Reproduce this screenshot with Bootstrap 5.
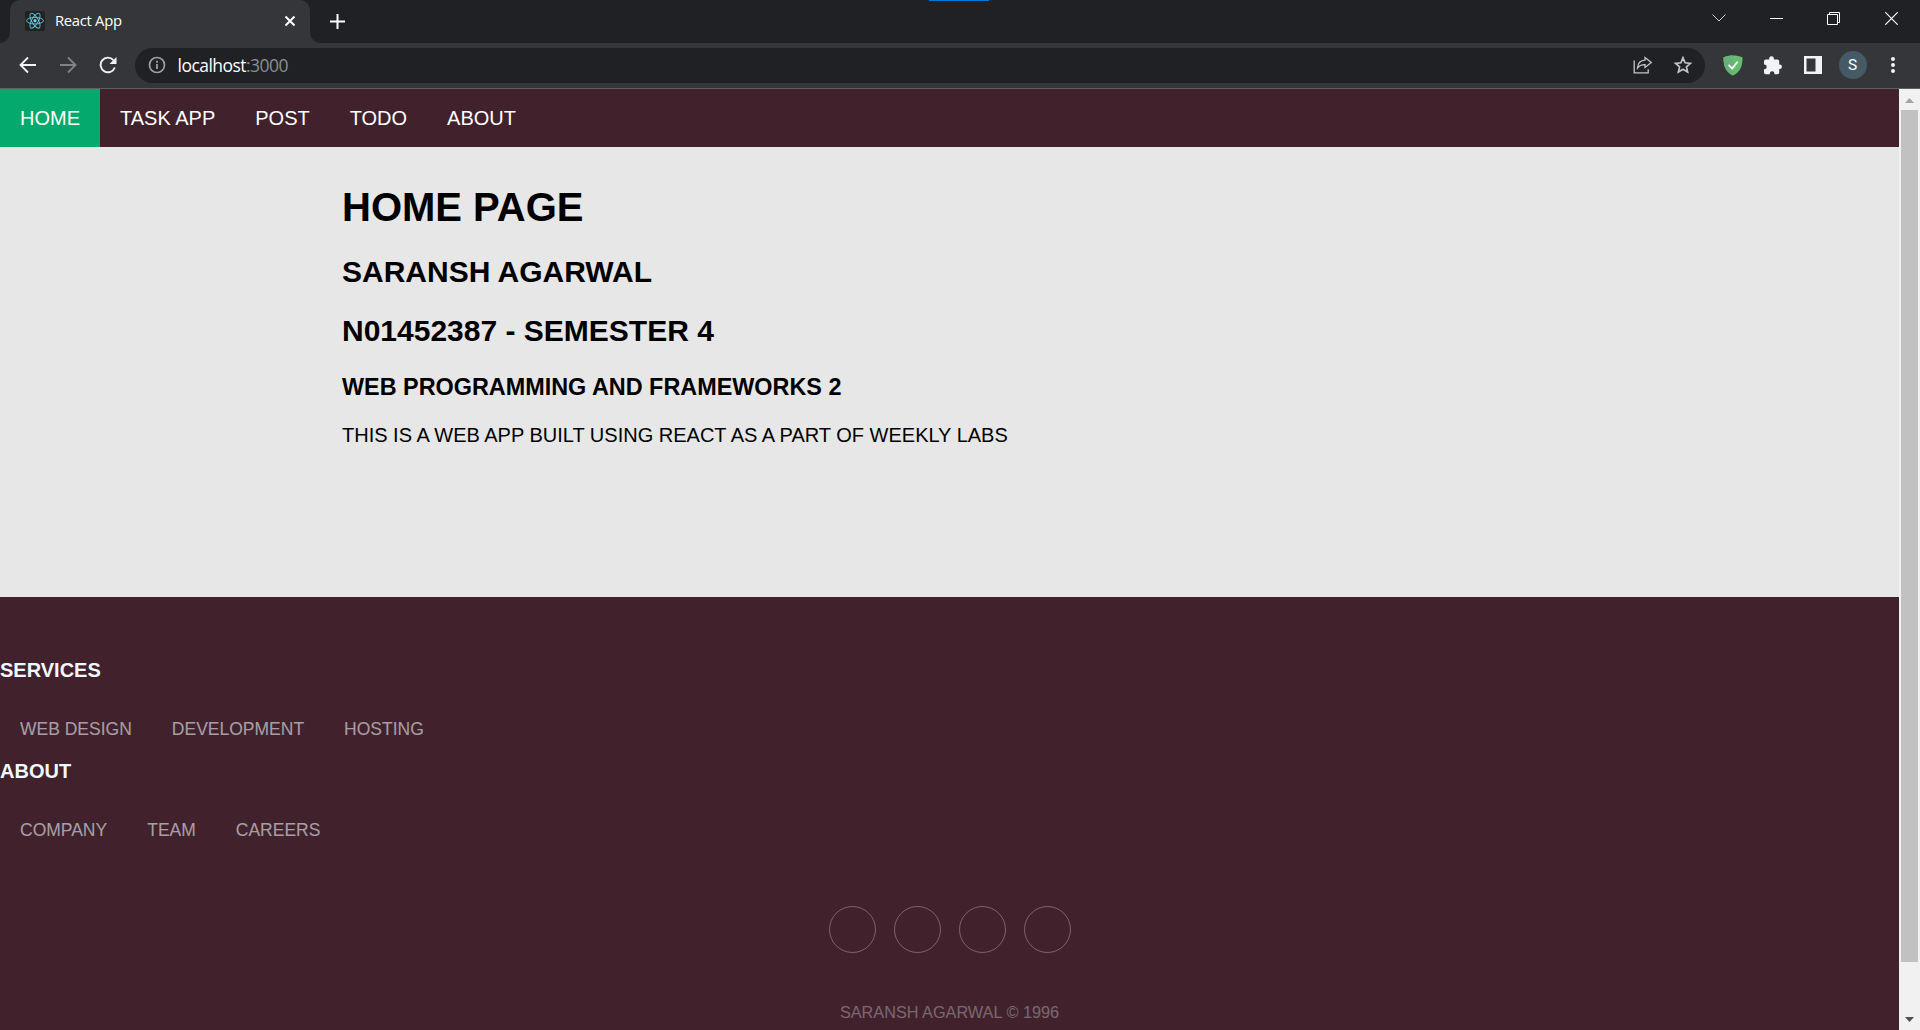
<!DOCTYPE html>
<html lang="en">
<head>
<meta charset="utf-8">
<title>React App</title>
<meta name="viewport" content="width=device-width, initial-scale=1">
<link href="https://cdn.jsdelivr.net/npm/bootstrap@5.3.0/dist/css/bootstrap.min.css" rel="stylesheet">
<style>
body{height:1030px;overflow:hidden;background:#e7e7e7;font-family:"Liberation Sans",Arial,sans-serif;font-size:20px;line-height:23px;color:#000}
svg{display:block;flex:none}
.tabstrip{height:43px;background:#202124;font-family:"Open Sans","Noto Sans",sans-serif}
.tab{width:300px;height:43px;margin-left:10px;background:#35363a;border-radius:10px 10px 0 0}
.tab::before,.tab::after{content:"";position:absolute;bottom:0;width:10px;height:10px}
.tab::before{left:-10px;background:radial-gradient(circle at 0 0,#202124 9.5px,#35363a 10px)}
.tab::after{right:-10px;background:radial-gradient(circle at 100% 0,#202124 9.5px,#35363a 10px)}
.tab-icon{margin:11px 0 0 15px}
.tab-title{font-size:14.8px;line-height:20px;color:#fff;margin:10px 0 0 10px;letter-spacing:-.3px}
.tab-close{margin:15px 14px 0 auto}
.tab-new{margin:13px 0 0 19px}
.accent{left:929px;top:0;width:60px;height:1px;background:#0078d7}
.win-cell{width:57.2px;height:36px}
.win-cell:not(:last-child){padding-right:2px}
.toolbar{height:46px;background:#35363a;border-bottom:1px solid #5f6063;padding:0 7.500px 1px 8px;font-family:"Open Sans","Noto Sans",sans-serif}
.cell{width:40px;height:40px;flex:none}
.omnibox{height:35px;background:#202124;border-radius:18px;margin:0 7.500px 0 7px;padding:0 2.500px 0 12px;font-size:17.5px;color:#fff;letter-spacing:-.53px}
.address{margin-left:10.500px;padding-top:1px}
.omnibox .port{color:#8b8e92}
.avatar{width:28px;height:28px;background:#455a64;color:#fff;font-size:15.5px;line-height:28px;font-family:Roboto,sans-serif}
.viewport{height:941px}
.topnav{height:58px;background:#41212b}
.topnav .nav-link{padding:18px 20px 17px;color:#fff;line-height:23px;border-radius:0}
.topnav .nav-link.active{background:#04aa6d}
.intro{height:450px;padding:10px 20px 0 342px;background:#e7e7e7}
.intro h1,.intro h2,.intro h3{font-weight:700}
.intro h1{font-size:40px;line-height:46px;margin:27px 0 0}
.intro h2{font-size:30px;line-height:34px;margin:25px 0 0}
.intro h3{font-size:23.4px;line-height:27px;margin:26px 0 0}
.intro p{margin:23px 0 0}
.foot{height:433px;background:#41212b;color:#f0f9ff;padding-top:61px}
.foot h3{font-size:20px;line-height:24px;font-weight:700;margin:0}
.foot ul{font-size:17.5px;line-height:20px;padding:0 20px;gap:40px;margin:37px 0 0}
.foot li{opacity:.58}
.foot ul+h3{margin-top:20px}
.foot .social{gap:18px;margin-top:66px}
.foot .social a{width:47px;height:47px;border:1px solid #fff;border-radius:50%;opacity:.3}
.foot .copy{font-size:16.25px;line-height:19px;opacity:.32;margin:50px 0 0}
.scroll{width:21px;background:#f1f1f1}
.thumb{width:17px;height:852px;background:#c1c1c1;margin-left:2px}
</style>
</head>
<body>
<header>
  <div class="tabstrip d-flex position-relative">
    <div class="accent position-absolute"></div>
    <div class="tab d-flex position-relative">
      <svg class="tab-icon" width="20" height="20" viewBox="0 0 20 20"><rect width="20" height="20" rx="2" fill="#222"/><g fill="none" stroke="#61dafb" stroke-opacity=".8" stroke-width="1"><ellipse cx="10" cy="9.7" rx="8.4" ry="3.3"/><ellipse cx="10" cy="9.7" rx="8.4" ry="3.3" transform="rotate(60 10 9.7)"/><ellipse cx="10" cy="9.7" rx="8.4" ry="3.3" transform="rotate(120 10 9.7)"/></g><circle cx="10" cy="9.7" r="1.6" fill="#61dafb"/></svg>
      <div class="tab-title">React App</div>
      <svg class="tab-close" width="12" height="12"><path d="M1.5 1.5l9 9M10.500 1.500l-9 9" stroke="#fff" stroke-width="2"/></svg>
    </div>
    <svg class="tab-new" width="17" height="17"><path d="M8.500 1v15M1 8.500h15" stroke="#fff" stroke-width="2"/></svg>
    <div class="d-flex ms-auto">
      <div class="win-cell d-flex align-items-center justify-content-center"><svg width="14" height="8"><path d="M.5.5L7 7 13.500.5" fill="none" stroke="#cfcfcf"/></svg></div>
      <div class="win-cell d-flex align-items-center justify-content-center"><svg width="13" height="13"><path d="M0 6.500h13" stroke="#fff"/></svg></div>
      <div class="win-cell d-flex align-items-center justify-content-center"><svg width="13" height="13"><path d="M.5 2.500h10v10H.5zM2.500 2.500v-2h10v10h-2" fill="none" stroke="#fff"/></svg></div>
      <div class="win-cell d-flex align-items-center justify-content-center"><svg width="13" height="13"><path d="M.3.3l12.400 12.400M12.700.3L.3 12.700" stroke="#fff" stroke-width="1.200"/></svg></div>
    </div>
  </div>
  <div class="toolbar d-flex align-items-center">
    <div class="cell d-flex align-items-center justify-content-center"><svg width="18" height="18" fill="none" stroke="#f1f3f4" stroke-width="1.800"><path d="M17 9H2M9 1.500L1.500 9 9 16.500"/></svg></div>
    <div class="cell d-flex align-items-center justify-content-center"><svg width="18" height="18" fill="none" stroke="#818286" stroke-width="1.800"><path d="M1 9h15M9 1.500L16.500 9 9 16.500"/></svg></div>
    <div class="cell d-flex align-items-center justify-content-center"><svg width="20" height="18"><path d="M15.300 4A7.300 7.300 0 1 0 16.800 11.500" fill="none" stroke="#f1f3f4" stroke-width="1.900"/><path d="M18.500 1v7h-7z" fill="#f1f3f4"/></svg></div>
    <div class="omnibox d-flex align-items-center flex-grow-1">
      <svg width="20" height="20"><circle cx="10" cy="10" r="7.500" fill="none" stroke="#9aa0a6" stroke-width="1.700"/><path d="M10 9v5M10 5.800v1.900" stroke="#9aa0a6" stroke-width="1.800"/></svg>
      <div class="address"><span>localhost</span><span class="port">:3000</span></div>
      <div class="cell d-flex align-items-center justify-content-center ms-auto"><svg width="20" height="18" fill="none" stroke="#c3c4c6" stroke-width="1.300"><path d="M1.200 4.500v12.300h14v-3.500M12 1.500l6.300 5L12 11.500V8.700C8.500 8.500 6.500 9.500 4.500 12 4.800 7.500 7.500 4.500 12 4.200z"/></svg></div>
      <div class="cell d-flex align-items-center justify-content-center"><svg width="20" height="20" fill="none" stroke="#c3c4c6" stroke-width="1.700"><path d="M10 2.800l2.100 5 5.300.5-4 3.500 1.200 5.200-4.600-2.800-4.600 2.800 1.200-5.200-4-3.500 5.300-.5z"/></svg></div>
    </div>
    <div class="cell d-flex align-items-center justify-content-center"><svg width="20" height="21"><path d="M10 .5c3.500 0 6.500.6 9.500 2C19.700 11 17 17.500 10 20.500 3 17.500.3 11 .5 2.500 3.500 1.100 6.500.5 10 .5z" fill="#68bc71"/><path d="M10 .5C6.500.5 3.500 1.100.5 2.500.3 11 3 17.500 10 20.500z" fill="#67b279"/><path d="M5.600 9.800l3.600 3.800 5.400-6.800" fill="none" stroke="#fff" stroke-width="1.700"/></svg></div>
    <div class="cell d-flex align-items-center justify-content-center"><svg width="18" height="19" viewBox="0 0 18 19"><path d="M1.700 3.400H5.200V2.600a2.300 2.300 0 0 1 4.700 0v.8h3.600A1.700 1.700 0 0 1 15.200 5v3.600h.5a2.200 2.200 0 0 1 0 4.500h-.5v3.500a1.700 1.700 0 0 1-1.700 1.700h-3.100v-.8a2.300 2.300 0 0 0-4.600 0v.8H1.700A1.700 1.700 0 0 1 0 16.600v-3.300h.8a2.400 2.400 0 0 0 0-4.700H0V5a1.700 1.700 0 0 1 1.700-1.600z" fill="#f1f3f4"/></svg></div>
    <div class="cell d-flex align-items-center justify-content-center"><svg width="18" height="18"><path d="M0 0h18v18H0zM2.500 2.500v13h9v-13z" fill="#f1f3f4" fill-rule="evenodd"/></svg></div>
    <div class="cell d-flex align-items-center justify-content-center"><div class="avatar rounded-circle text-center">S</div></div>
    <div class="cell d-flex align-items-center justify-content-center"><svg width="4" height="16" fill="#f1f3f4"><circle cx="2" cy="2" r="2"/><circle cx="2" cy="8" r="2"/><circle cx="2" cy="14" r="2"/></svg></div>
  </div>
</header>
<div class="viewport d-flex">
  <main class="flex-grow-1">
    <nav class="topnav nav">
      <a class="nav-link active">HOME</a>
      <a class="nav-link">TASK APP</a>
      <a class="nav-link">POST</a>
      <a class="nav-link">TODO</a>
      <a class="nav-link">ABOUT</a>
    </nav>
    <section class="intro">
      <h1>HOME PAGE</h1>
      <h2>SARANSH AGARWAL</h2>
      <h2>N01452387 - SEMESTER 4</h2>
      <h3>WEB PROGRAMMING AND FRAMEWORKS 2</h3>
      <p>THIS IS A WEB APP BUILT USING REACT AS A PART OF WEEKLY LABS</p>
    </section>
    <footer class="foot">
      <h3>SERVICES</h3>
      <ul class="list-unstyled d-flex"><li>WEB DESIGN</li><li>DEVELOPMENT</li><li>HOSTING</li></ul>
      <h3>ABOUT</h3>
      <ul class="list-unstyled d-flex"><li>COMPANY</li><li>TEAM</li><li>CAREERS</li></ul>
      <div class="social d-flex justify-content-center"><a></a><a></a><a></a><a></a></div>
      <p class="copy text-center">SARANSH AGARWAL © 1996</p>
    </footer>
  </main>
  <div class="scroll d-flex flex-column">
    <svg width="21" height="21"><path d="M6 14h9l-4.500-5z" fill="#a3a3a3"/></svg>
    <div class="thumb"></div>
    <svg class="mt-auto" width="21" height="21"><path d="M6 8h9l-4.500 5z" fill="#505050"/></svg>
  </div>
</div>
<script src="https://cdn.jsdelivr.net/npm/bootstrap@5.3.0/dist/js/bootstrap.bundle.min.js"></script>
</body>
</html>
